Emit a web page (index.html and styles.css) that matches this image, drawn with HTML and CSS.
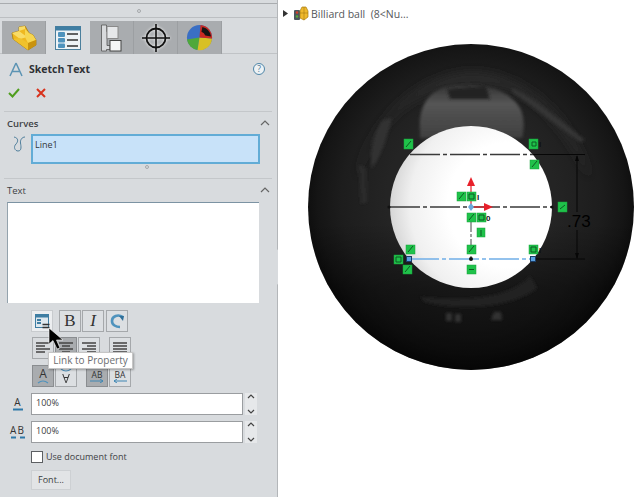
FILE: index.html
```html
<!DOCTYPE html>
<html lang="en">
<head>
<meta charset="utf-8">
<title>Sketch Text</title>
<link rel="stylesheet" href="styles.css">
</head>
<body>
<div class="app">
  <aside class="panel">
    <div class="topstrip"><span class="grip"></span></div>
    <div class="tabs">
      <div class="tab">
        <svg width="26" height="26" viewBox="11 25 26 26"><path d="M12 33 L19 31 L19 27 L25 26 L29 33 L33 35 L36 40 L36 45 L28 50 L13 39 Z" fill="#efb820" stroke="#a57c10" stroke-width="0.8"/><path d="M19 31 L25 29 L25 26 L19 27 Z M12 33 L19 31 L27 37 L20 39 Z" fill="#f8dc68"/><path d="M25 29 L29 33 L33 35 L36 40 L28 43 L25 37 Z" fill="#f7d650"/><path d="M28 43 L36 40 L36 45 L28 50 Z" fill="#c9930f"/><path d="M13 39 L28 50 L28 43 L20 38 Z" fill="#f0c22c"/></svg>
      </div>
      <div class="tab tab-active">
        <svg width="26" height="24" viewBox="0 0 26 24"><rect x="0.5" y="0.500" width="25" height="23" fill="#eef3f6" stroke="#4b7f9c"/><rect x="0.5" y="0.500" width="25" height="4" fill="#3f7ea3"/><rect x="3" y="6" width="7" height="5" rx="1" fill="#4f93bd"/><rect x="3" y="12" width="7" height="4.500" rx="1" fill="#4f93bd"/><rect x="3" y="17.500" width="7" height="4.500" rx="1" fill="#4f93bd"/><path d="M12 8h11M12 14h11M12 20h11" stroke="#333" stroke-width="1.300"/></svg>
      </div>
      <div class="tab">
        <svg width="23" height="28" viewBox="101 24.500 23 28"><path d="M102.500 25.500H107.500V32H108V46H111V50H107.500V51.500H102.500Z" fill="#d8dadc" stroke="#555" stroke-width="0.8"/><rect x="108" y="27" width="11" height="12" fill="#e6e8ea" stroke="#8a8a8a"/><rect x="111" y="41" width="11" height="10.500" fill="#f4f5f6" stroke="#444"/></svg>
      </div>
      <div class="tab">
        <svg class="crosshair" width="30" height="30" viewBox="0 0 30 30"><circle cx="15" cy="15" r="9.500" fill="none" stroke="#111" stroke-width="1.800"/><path d="M15 1v28M1 15h28" stroke="#111" stroke-width="1.600"/></svg>
      </div>
      <div class="tab">
        <svg width="27" height="27" viewBox="0 0 28 28"><circle cx="14" cy="14" r="13" fill="#3a6fc4"/><path d="M14 14 L1 16 A13 13 0 0 0 12 27 Z" fill="#4fa83a"/><path d="M14 14 L12 27 A13 13 0 0 0 27 15 Z" fill="#d8c024"/><path d="M14 14 L27 15 A13 13 0 0 0 15 1 Z" fill="#c92a22"/><path d="M17 3 A12 12 0 0 1 26 13 L20 12 A6 6 0 0 0 16 8 Z" fill="#141414"/></svg>
      </div>
    </div>

    <div class="titlebar">
      <svg class="title-icon" width="14" height="15" viewBox="0 0 14 15"><path d="M7 1 L1 14 M7 1 L13 14 M3.500 9.500h7" fill="none" stroke="#5b93b3" stroke-width="1.500"/></svg>
      <span class="title">Sketch Text</span>
      <span class="help">?</span>
    </div>
    <div class="actions">
      <svg width="12" height="10" viewBox="0 0 12 10"><path d="M1 5 L4.500 8.500 L11 1" fill="none" stroke="#4f9e1e" stroke-width="2"/></svg>
      <svg width="10" height="10" viewBox="0 0 10 10"><path d="M1 1 L9 9 M9 1 L1 9" stroke="#d8321c" stroke-width="2"/></svg>
    </div>

    <section class="group group-curves">
      <div class="group-head"><span>Curves</span><svg width="10" height="6" viewBox="0 0 10 6"><path d="M1 5 L5 1 L9 5" fill="none" stroke="#666" stroke-width="1.200"/></svg></div>
      <div class="curve-row">
        <svg width="14" height="16" viewBox="0 0 14 16"><path d="M2 1 C7 2 6 6 4 8 C1 11 3 15 6 15 C10 15 9 10 8.500 7 C8 4 10 1 13 1" fill="none" stroke="#4f7f9c" stroke-width="1"/></svg>
        <div class="selbox">Line1</div>
      </div>
      <div class="mini-grip"></div>
    </section>

    <section class="group group-text">
      <div class="group-head"><span>Text</span><svg width="10" height="6" viewBox="0 0 10 6"><path d="M1 5 L5 1 L9 5" fill="none" stroke="#666" stroke-width="1.200"/></svg></div>
      <div class="textarea"></div>

      <div class="btnrow row-one">
        <div class="tb tb-link"><svg width="15" height="15" viewBox="0 0 15 15"><rect x="0.5" y="0.500" width="13" height="13" fill="#dfe8ee" stroke="#3f7ea3"/><rect x="0.5" y="0.500" width="13" height="3" fill="#3f7ea3"/><rect x="2" y="5" width="4" height="2" fill="#3f7ea3"/><rect x="2" y="8" width="4" height="2" fill="#3f7ea3"/><path d="M7.500 10.500h7M7.500 13.500h7" stroke="#333" stroke-width="1.500"/></svg></div>
        <div class="tb tb-b">B</div>
        <div class="tb tb-i">I</div>
        <div class="tb tb-redo"><svg width="16" height="16" viewBox="0 0 16 16"><path d="M14 4 C9 1 3 3 3 8 C3 12 7 14 11 14" fill="none" stroke="#4f93bd" stroke-width="2.600"/><path d="M10 3 L15 3 L14 8 Z" fill="#2f6f99"/></svg></div>
      </div>

      <div class="btnrow row-two">
        <div class="tb tb-plain"><svg width="14" height="12" viewBox="0 0 14 12"><path d="M0 1h14M0 4h9M0 7h14M0 10h9" stroke="#444" stroke-width="1.300"/></svg></div>
        <div class="tb tb-on"><svg width="14" height="12" viewBox="0 0 14 12"><path d="M0 1h14M3 4h8M0 7h14M3 10h8" stroke="#444" stroke-width="1.300"/></svg></div>
        <div class="tb"><svg width="14" height="12" viewBox="0 0 14 12"><path d="M0 1h14M5 4h9M0 7h14M5 10h9" stroke="#444" stroke-width="1.300"/></svg></div>
        <div class="tb tb-gap"><svg width="14" height="12" viewBox="0 0 14 12"><path d="M0 1h14M0 4h14M0 7h14M0 10h14" stroke="#444" stroke-width="1.300"/></svg></div>
      </div>

      <div class="btnrow row-three">
        <div class="tb tb-on tb-glyph"><span class="glyph">A</span><svg width="12" height="4" viewBox="0 0 12 4"><path d="M1 3 Q6 -1 11 3" fill="none" stroke="#4f93bd" stroke-width="1.200"/></svg></div>
        <div class="tb tb-glyph"><svg width="12" height="4" viewBox="0 0 12 4"><path d="M1 1 Q6 5 11 1" fill="none" stroke="#4f93bd" stroke-width="1.200"/></svg><span class="glyph glyph-flip">A</span></div>
        <div class="tb tb-on tb-glyph tb-gap2"><span class="glyph glyph-small">AB</span><svg width="14" height="4" viewBox="0 0 14 4"><path d="M0 2h13M10 0l3 2-3 2" fill="none" stroke="#3f86b3" stroke-width="1"/></svg></div>
        <div class="tb tb-glyph"><span class="glyph glyph-small">BA</span><svg width="14" height="4" viewBox="0 0 14 4"><path d="M14 2H1M4 0L1 2l3 2" fill="none" stroke="#3f86b3" stroke-width="1"/></svg></div>
      </div>

      <div class="field">
        <div class="field-icon"><span>A</span><svg width="10" height="3" viewBox="0 0 10 3"><path d="M0 1.500h10" stroke="#2f78a8" stroke-width="2"/></svg></div>
        <div class="input">100%</div>
        <div class="spin"><svg width="8" height="22" viewBox="0 0 8 22"><path d="M1 5 L4 2 L7 5 M1 17 L4 20 L7 17" fill="none" stroke="#444" stroke-width="1.200"/></svg></div>
      </div>
      <div class="field field-second">
        <div class="field-icon"><span class="wide">AB</span><svg width="14" height="3" viewBox="0 0 14 3"><path d="M0 1.500h5M9 1.500h5" stroke="#2f78a8" stroke-width="2"/></svg></div>
        <div class="input">100%</div>
        <div class="spin"><svg width="8" height="22" viewBox="0 0 8 22"><path d="M1 5 L4 2 L7 5 M1 17 L4 20 L7 17" fill="none" stroke="#444" stroke-width="1.200"/></svg></div>
      </div>
      <label class="check"><span class="box"></span><span>Use document font</span></label>
      <div class="fontbtn">Font...</div>
    </section>

    <div class="tooltip">Link to Property</div>
    <svg class="cursor" width="16" height="24" viewBox="0 0 16 24"><path d="M1 1 L1 17 L5 13.500 L9 22 L12 21 L8.500 13 L15 13 Z" fill="#000" stroke="#fff" stroke-width="0.600"/></svg>
    <div class="edge-handle"><span></span></div>
  </aside>

  <main class="view">
    <div class="tree">
      <svg class="caret" width="5" height="7" viewBox="0 0 5 7"><path d="M0 0 L5 3.500 L0 7 Z" fill="#333"/></svg>
      <svg width="15" height="15" viewBox="0 0 15 15"><rect x="0" y="4" width="6" height="10" rx="1" fill="#4c565e"/><circle cx="3" cy="6.500" r="1.300" fill="#d8402a"/><circle cx="3" cy="10.500" r="1.300" fill="#5aa83a"/><path d="M6 5 L8 1 L12 1 L14 5 L14 11 L10 14 L6 12 Z" fill="#efb92c" stroke="#a67b12" stroke-width="0.700"/><path d="M10 1V14M6 7H14" stroke="#a67b12" stroke-width="0.600"/></svg>
      <span class="tree-label">Billiard ball&nbsp; (8&lt;Nu...</span>
    </div>
    <svg class="sketch" width="358" height="497" viewBox="277 0 358 497">
      <defs>
        <radialGradient id="ballg" cx="471" cy="200" r="170" gradientUnits="userSpaceOnUse">
          <stop offset="0.5" stop-color="#242424"/>
          <stop offset="0.76" stop-color="#1d1d1d"/>
          <stop offset="0.9" stop-color="#151515"/>
          <stop offset="1" stop-color="#0b0b0b"/>
        </radialGradient>
        <linearGradient id="shade" x1="0" y1="0" x2="0" y2="1">
          <stop offset="0" stop-color="#000" stop-opacity="0"/>
          <stop offset="0.55" stop-color="#000" stop-opacity="0"/>
          <stop offset="0.75" stop-color="#000" stop-opacity="0.35"/>
          <stop offset="1" stop-color="#000" stop-opacity="0.5"/>
        </linearGradient>
        <linearGradient id="windowg" x1="0" y1="0" x2="0" y2="1">
          <stop offset="0" stop-color="#333"/>
          <stop offset="0.35" stop-color="#555"/>
          <stop offset="1" stop-color="#3f3f3f"/>
        </linearGradient>
        <radialGradient id="whiteg" cx="510" cy="205" r="125" gradientUnits="userSpaceOnUse">
          <stop offset="0.5" stop-color="#fff"/>
          <stop offset="0.8" stop-color="#f0f0f0"/>
          <stop offset="1" stop-color="#cfcfcf"/>
        </radialGradient>
        <filter id="soft" x="-20%" y="-20%" width="140%" height="140%"><feGaussianBlur stdDeviation="1.400"/></filter>
        <filter id="softer" x="-20%" y="-20%" width="140%" height="140%"><feGaussianBlur stdDeviation="5"/></filter>
      </defs>

      <circle cx="471" cy="207" r="163" fill="url(#ballg)"/>
      <path d="M356 180 C368 125 415 74 471 72 C530 72 578 125 590 180 C572 140 545 105 515 92 C480 78 430 84 398 112 C378 130 364 155 356 180 Z" fill="#2c2c2c" filter="url(#softer)"/>
      <path d="M420 132 C418 104 430 90 450 86 C480 82 508 88 520 108 C525 118 524 130 522 138 L420 138 Z" fill="url(#windowg)" filter="url(#soft)"/>
      <path d="M447 89 L486 86 L490 99 L450 99 Z" fill="#232323" filter="url(#soft)"/>
      <path d="M512 88 C535 98 560 120 585 140 L580 142 C556 125 532 106 512 92 Z" fill="#363636" filter="url(#soft)"/>
      <path d="M383 120 C375 130 368 155 372 168 C380 158 388 135 392 118 Z" fill="#333" filter="url(#soft)"/>
      <path d="M359 165 L366 168 L367 202 L361 204 Z" fill="#2c2c2c" filter="url(#soft)"/>
      <circle cx="471" cy="207" r="163" fill="url(#shade)"/>
      <path d="M420 297 C470 302 510 298 530 276 L537 288 C515 306 465 312 425 302 Z" fill="#232323" filter="url(#soft)"/>
      <path d="M446 313h6v8h-6zM455 314h6v8h-6zM491 320l3-8h7l1 8z" fill="#333" filter="url(#soft)"/>
      <circle cx="471" cy="207" r="81" fill="url(#whiteg)"/>

      <path d="M410 154.500H533M390 207H552" stroke="#3a3a3a" stroke-width="1.400" stroke-dasharray="30 3 4 3" fill="none"/>
      <path d="M409 259H533" stroke="#70aee8" stroke-width="1.600" stroke-dasharray="30 3 4 3" fill="none"/>
      <path d="M471 222V259" stroke="#444" stroke-width="1" stroke-dasharray="10 2 3 2"/>
      <path d="M533 154.500H585M533 259H585M577 156V212M577 230V258" stroke="#060606" stroke-width="1" fill="none"/>
      <path d="M577 155l-2 6h4zM577 259l-2-6h4z" fill="#060606"/>
      <text class="dim" x="567" y="227">.73</text>

      <path d="M471 207V186" stroke="#e8202a" stroke-width="1.200"/>
      <path d="M471 177l-4 9h8z" fill="#e8202a"/>
      <path d="M471 207H484" stroke="#e8202a" stroke-width="1.200"/>
      <path d="M493 207l-9-4v8z" fill="#e8202a"/>
      <path d="M471 203l3 4-3 4-3-4z" fill="#6aa7dc"/>
      <circle cx="389" cy="207" r="1.600" fill="#111"/>
      <circle cx="552" cy="207" r="1.600" fill="#111"/>
      <circle cx="471" cy="259" r="2" fill="#111"/>
      <rect x="406.500" y="256.500" width="5" height="5" fill="#5aa0e0" stroke="#1b3d66"/>
      <rect x="530.500" y="256.500" width="5" height="5" fill="#5aa0e0" stroke="#1b3d66"/>

      <g class="rel">
        <rect x="404" y="139" width="9" height="10"/><rect x="529" y="139" width="9" height="10"/>
        <rect x="530" y="160" width="9" height="9"/><rect x="558" y="202" width="9" height="10"/>
        <rect x="457" y="192" width="9" height="9"/><rect x="467" y="192" width="9" height="9"/>
        <rect x="467" y="213" width="9" height="9"/><rect x="477" y="213" width="9" height="9"/>
        <rect x="477" y="228" width="8" height="9"/><rect x="467" y="245" width="9" height="9"/>
        <rect x="406" y="245" width="9" height="9"/><rect x="529" y="245" width="9" height="9"/>
        <rect x="394" y="255" width="9" height="9"/><rect x="403" y="265" width="9" height="9"/>
        <rect x="467" y="265" width="9" height="9"/>
      </g>
      <path class="relmark" d="M406 147l5-6M532 142h4v4h-4zM532 167l5-6M560 209l5-4M459 199l5-6M469 194h5v5h-5zM469 220l5-6M479 215h5v5h-5zM481 230v6M469 252l5-6M408 252l5-6M531 247h5v5h-5zM396 257h5v5h-5zM405 272l5-6M469 269.500h5"/>
      <text class="marksub" x="477" y="200">I</text>
      <text class="marksub" x="486" y="221">0</text>
      <text class="marksub" x="539" y="253">I</text>
      <text class="marksub" x="539" y="147">I</text>
    </svg>
  </main>
</div>
</body>
</html>
```

FILE: styles.css
```css
* { box-sizing: border-box; }
html, body { margin: 0; padding: 0; }
body {
  width: 635px;
  height: 497px;
  overflow: hidden;
  background: #fff;
  font-family: "Open Sans", "Noto Sans", "Liberation Sans", sans-serif;
  color: #3a3d40;
}
.app { display: flex; width: 635px; height: 497px; }

/* Left panel */
.panel {
  position: relative;
  flex: 0 0 278px;
  height: 497px;
  background: #d8dbde;
  border-right: 1px solid #b3b6b9;
}
.topstrip {
  height: 15px;
  margin-top: 3px;
  margin-bottom: 3px;
  border-top: 1px solid #a9acaf;
  border-bottom: 1px solid #bcbfc2;
  display: flex;
  justify-content: center;
  align-items: center;
}
.grip { width: 4px; height: 4px; border: 1px solid #a5a8ab; border-radius: 50%; }
.tabs {
  display: flex;
  padding-left: 2px;
  height: 33px;
  border-bottom: 1px solid #c0c3c6;
}
.tab {
  width: 44px;
  height: 33px;
  background: #a9acaf;
  border-right: 1px solid #9c9fa2;
  display: flex;
  align-items: center;
  justify-content: center;
}
.tab-active {
  background: #d8dbde;
  height: 34px;
  border-right: none;
}
.crosshair { filter: drop-shadow(0 0 1.500px #fff); }
.titlebar {
  display: flex;
  align-items: center;
  height: 16px;
  margin-top: 7px;
  padding-left: 9px;
}
.title-icon { margin-right: 6px; }
.title { font-size: 10.500px; font-weight: 700; color: #2e3134; }
.help {
  margin-left: auto;
  margin-right: 12px;
  width: 12px;
  height: 12px;
  border: 1px solid #4f86a8;
  border-radius: 50%;
  font-size: 8.500px;
  line-height: 10px;
  text-align: center;
  color: #3f6f8f;
  background: #edf2f5;
}
.actions {
  display: flex;
  align-items: center;
  gap: 16px;
  padding-left: 8px;
  margin-top: 11px;
  height: 10px;
}
.group { margin: 0 5px 0 4px; border-top: 1px solid #c4c7ca; }
.group-curves { margin-top: 13px; height: 67px; }
.group-head {
  display: flex;
  justify-content: space-between;
  align-items: center;
  height: 14px;
  margin-top: 4px;
  padding: 0 2px 0 3px;
  font-size: 9.500px;
  font-weight: 600;
  color: #3f4245;
}
.curve-row {
  display: flex;
  align-items: flex-start;
  gap: 5px;
  padding-left: 8px;
  margin-top: 4px;
}
.curve-row > svg { margin-top: 2px; }
.selbox {
  width: 229px;
  height: 30px;
  background: #c8e2f9;
  border: 2px solid #62acd6;
  padding: 2px 2px;
  font-size: 9px;
  line-height: 14px;
  color: #34373a;
}
.mini-grip {
  width: 4px;
  height: 4px;
  margin: 1px 0 0 141px;
  border: 1px solid #a5a8ab;
  border-radius: 50%;
}
.group-text .group-head { font-weight: 500; }
.textarea {
  width: 252px;
  height: 101px;
  margin: 5px 0 0 3px;
  background: #fff;
  border-top: 1px solid #7c93a3;
  border-left: 1px solid #94a3ad;
}

.btnrow { display: flex; padding-left: 28px; }
.row-one { margin-top: 7px; height: 22px; padding-left: 27px; }
.row-two { margin-top: 5px; height: 23px; }
.row-three { margin-top: 5px; height: 23px; }
.tb {
  width: 22px;
  height: 22px;
  margin-right: 1px;
  background: #dcdfe2;
  border: 1px solid #a5a8ab;
  display: flex;
  flex-direction: column;
  align-items: center;
  justify-content: center;
}
.tb-link { background: #eceef0; margin-right: 6px; border-color: #c8cbce; }
.tb-b { font-family: "Liberation Serif", serif; font-size: 17px; color: #333; }
.tb-i { font-family: "Liberation Serif", serif; font-style: italic; font-size: 17px; color: #333; margin-right: 2px; }
.tb-on { background: #a9acaf; border-color: #8a8d90; }
.tb-plain { background: #d8dbde; }
.tb-gap { margin-left: 8px; }
.tb-gap2 { margin-left: 8px; }
.glyph { font-size: 12px; line-height: 12px; color: #333; }
.glyph-small { font-size: 8.500px; line-height: 9px; }
.glyph-flip { transform: scaleY(-1); }

.field { display: flex; align-items: center; height: 22px; margin-top: 5px; }
.field-second { margin-top: 6px; }
.field-icon {
  flex: 0 0 27px;
  display: flex;
  flex-direction: column;
  align-items: center;
  font-size: 10px;
  line-height: 11px;
  color: #333;
}
.field-icon .wide { letter-spacing: 1px; }
.input {
  width: 212px;
  height: 22px;
  background: #fff;
  border: 1px solid #9a9da0;
  padding-left: 4px;
  font-size: 9px;
  line-height: 18px;
  color: #3d4043;
}
.spin {
  margin-left: 2px;
  width: 12px;
  height: 22px;
  background: #e6e8ea;
  display: flex;
  align-items: center;
  justify-content: center;
}
.check {
  display: flex;
  align-items: center;
  gap: 3px;
  margin: 7px 0 0 27px;
  font-size: 9px;
  color: #3f4245;
  height: 13px;
}
.box { width: 12px; height: 12px; background: #fff; border: 1px solid #5c5f62; }
.fontbtn {
  width: 40px;
  height: 20px;
  margin: 7px 0 0 27px;
  background: #e2e4e6;
  border: 1px solid #cdd0d3;
  font-size: 9px;
  line-height: 18px;
  text-align: center;
  color: #3a3d40;
}

/* Overlays */
.tooltip {
  position: absolute;
  left: 48px;
  top: 352px;
  width: 85px;
  height: 17px;
  background: #fff;
  border: 1px solid #c6c6c6;
  box-shadow: 1px 1px 2px rgba(0, 0, 0, .3);
  font-size: 10px;
  line-height: 15px;
  text-align: center;
  color: #6a6d70;
}
.cursor { position: absolute; left: 48px; top: 327px; }
.edge-handle {
  position: absolute;
  left: 277px;
  top: 249px;
  width: 9px;
  height: 36px;
  background: #d8dbde;
  border: 1px solid #c0c3c6;
  border-left: none;
  display: flex;
  align-items: center;
  justify-content: center;
}
.edge-handle span { width: 4px; height: 4px; border: 1px solid #a5a8ab; border-radius: 50%; }

/* Graphics view */
.view { position: relative; flex: 1; height: 497px; background: #fff; overflow: hidden; }
.tree {
  position: absolute;
  left: 5px;
  top: 6px;
  display: flex;
  align-items: center;
  gap: 6px;
  font-size: 10.500px;
  color: #55585b;
  z-index: 1;
}
.tree-label { margin-left: -4px; }
.sketch { display: block; margin-left: -1px; }
.rel rect { fill: #1fc24a; stroke: #18a33c; stroke-width: 0.5; }
.relmark { fill: none; stroke: #0d5a22; stroke-width: 1; }
.dim { font-family: "Liberation Sans", sans-serif; font-size: 17px; font-weight: 400; fill: #000; }
.marksub { font-family: "Liberation Sans", sans-serif; font-size: 8px; font-weight: 700; fill: #111; }
```
